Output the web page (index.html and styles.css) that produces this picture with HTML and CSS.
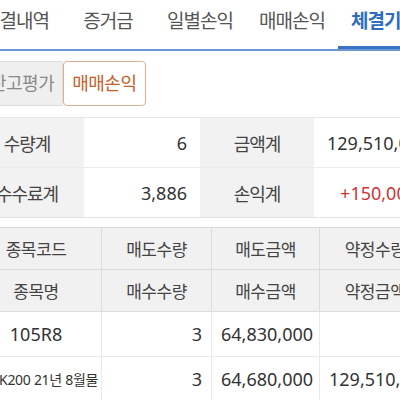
FILE: index.html
```html
<!DOCTYPE html>
<html lang="ko">
<head>
<meta charset="utf-8">
<link rel="stylesheet" href="styles.css">
</head>
<body>
<div class="page">
  <nav class="tabs">
    <div class="tab">미결내역</div>
    <div class="tab">증거금</div>
    <div class="tab">일별손익</div>
    <div class="tab">매매손익</div>
    <div class="tab active">체결기준</div>
  </nav>

  <div class="seg">
    <div class="seg-btn">잔고평가</div>
    <div class="seg-btn on">매매손익</div>
  </div>

  <table class="summary">
    <tr>
      <th>수량계</th><td>6</td>
      <th>금액계</th><td>129,510,000</td>
    </tr>
    <tr>
      <th>수수료계</th><td>3,886</td>
      <th>손익계</th><td class="plus">+150,000</td>
    </tr>
  </table>

  <table class="detail">
    <colgroup>
      <col class="c1"><col class="c2"><col class="c3"><col class="c4">
    </colgroup>
    <thead>
      <tr><th>종목코드</th><th>매도수량</th><th>매도금액</th><th>약정수량</th></tr>
      <tr><th>종목명</th><th>매수수량</th><th>매수금액</th><th>약정금액</th></tr>
    </thead>
    <tbody>
      <tr><td class="name">105R8</td><td>3</td><td>64,830,000</td><td></td></tr>
      <tr><td class="name small">미니K200 21년 8월물</td><td>3</td><td>64,680,000</td><td>129,510,000</td></tr>
    </tbody>
  </table>
</div>
</body>
</html>
```

FILE: styles.css
```css
html, body {
  margin: 0;
  padding: 0;
  background: #fff;
  overflow: hidden;
}
body {
  font-family: "Noto Sans", "Noto Sans CJK KR", sans-serif;
  color: #333;
}
.page {
  width: 460px;
  margin-left: -30px;
}

/* tabs */
.tabs {
  display: flex;
  border-bottom: 2px solid #6a97d6;
}
.tab {
  width: 92px;
  flex: none;
  height: 40px;
  padding-top: 9px;
  line-height: 24px;
  text-align: center;
  font-size: 19px;
  letter-spacing: -1px;
  color: #555;
  box-sizing: content-box;
}
.tab.active {
  color: #2f6dc2;
  font-weight: 700;
  box-shadow: inset 0 -3px 0 #3a72c4;
}

/* segmented buttons */
.seg {
  display: flex;
  margin: 10px 0 0 11px;
}
.seg-btn {
  height: 43px;
  line-height: 43px;
  padding: 0 8px;
  font-size: 18px;
  letter-spacing: -0.5px;
  color: #8a8a8a;
  background: #efefef;
  border: 1px solid #dedede;
  border-radius: 4px 0 0 4px;
}
.seg-btn.on {
  color: #c4612d;
  background: #fff;
  border-color: #dcb096;
  border-radius: 4px;
  padding: 0 8px;
}

/* summary */
.summary {
  width: 460px;
  margin-top: 11px;
  border-collapse: collapse;
  table-layout: fixed;
  border-top: 1px solid #e8e8e8;
  border-bottom: 1px solid #e2e2e2;
}
.summary th, .summary td {
  height: 49px;
  padding: 0 13px;
  border-bottom: 1px solid #ececec;
}
.summary tr:last-child th, .summary tr:last-child td {
  border-bottom: none;
}
.summary th {
  width: 88px;
  background: #f2f2f2;
  font-weight: 400;
  font-size: 18px;
  letter-spacing: -1px;
  color: #444;
  text-align: center;
}
.summary td {
  width: 90px;
  font-size: 18px;
  text-align: right;
  color: #333;
}
.summary td.plus {
  color: #d03434;
}

/* detail */
.detail {
  width: 460px;
  margin-top: 9px;
  border-collapse: collapse;
  table-layout: fixed;
}
.detail col.c1 { width: 131px; }
.detail col.c2 { width: 110px; }
.detail col.c3 { width: 108px; }
.detail col.c4 { width: 111px; }
.detail th {
  height: 41px;
  padding: 0;
  background: #f1f1f1;
  border: 1px solid #dcdcdc;
  font-weight: 400;
  font-size: 17px;
  letter-spacing: -0.5px;
  color: #444;
  text-align: center;
}
.detail td {
  height: 44px;
  padding: 0 9px;
  border: 1px solid #e9e9e9;
  border-top: none;
  font-size: 18px;
  text-align: right;
  color: #333;
  white-space: nowrap;
}
.detail td.name {
  text-align: center;
  padding: 0;
}
.detail td.small {
  font-size: 14px;
  letter-spacing: -0.3px;
}
```
